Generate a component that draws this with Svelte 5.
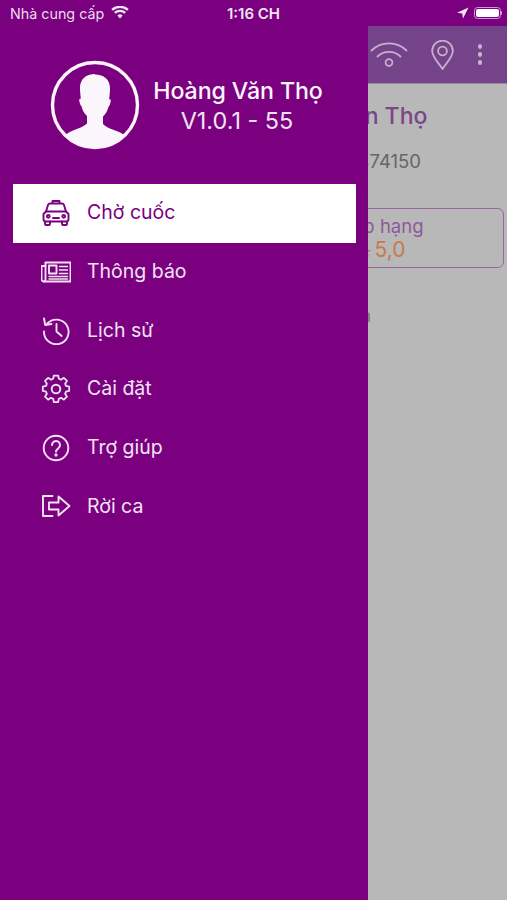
<script>
  const items = [
    { id: 'taxi', label: 'Chờ cuốc', active: true },
    { id: 'news', label: 'Thông báo' },
    { id: 'history', label: 'Lịch sử' },
    { id: 'gear', label: 'Cài đặt' },
    { id: 'help', label: 'Trợ giúp' },
    { id: 'logout', label: 'Rời ca' }
  ];
</script>

<div class="screen">
  <header class="status">
    <div class="status-left">
      <span>Nhà cung cấp</span>
      <svg class="wifi" viewBox="0 0 18 13" width="18" height="13">
        <path d="M9 12.6 6.3 9.6a3.9 3.9 0 0 1 5.4 0zM4.6 7.8 3 6a8.800 8.800 0 0 1 12 0l-1.600 1.800a6.400 6.400 0 0 0-8.800 0zM1.900 4.800.3 3a13 13 0 0 1 17.400 0l-1.600 1.800a10.600 10.600 0 0 0-14.200 0z" fill="#f1e2f2"/>
      </svg>
    </div>
    <div class="status-time">1:16 CH</div>
    <div class="status-right">
      <svg viewBox="0 0 13 12" width="13" height="12"><path d="M12.500.5 1 5.800l5.200.7.800 5z" fill="#f4e8f5"/></svg>
      <div class="battery"><div class="battery-fill"></div></div>
      <div class="battery-cap"></div>
    </div>
  </header>

  <div class="body">
    <nav class="drawer">
      <div class="profile">
        <svg class="avatar" viewBox="0 0 90 90" width="90" height="90">
          <defs><clipPath id="ring"><circle cx="45" cy="45" r="42"/></clipPath></defs>
          <circle cx="45" cy="45" r="42.500" fill="none" stroke="#fbf6fb" stroke-width="3.400"/>
          <path clip-path="url(#ring)" d="M45 14c-9 0-15 5-15 14 0 4 .6 8 .8 11-.9-.5-1.800.3-1.500 2 .4 2 1.200 4.700 2.300 5.500.8 4 2.700 7 5.400 9.500v7.500c-3 3-9 5-14 7-3.500 1.400-7 3.500-8 5v14h60V76c-1.500-2-5-3.600-8.500-5-5-2-11-4-13.500-7v-7.500c2.700-2.500 4.600-5.500 5.400-9.500 1.100-.8 1.900-3.500 2.300-5.500.3-1.700-.6-2.500-1.500-2 .2-3 .8-7 .8-11 0-9-6-14-15-14z" fill="#fbf6fb"/>
        </svg>
        <div class="who">
          <div class="name">Hoàng Văn Thọ</div>
          <div class="version">V1.0.1 - 55</div>
        </div>
      </div>

      <ul class="menu">
        {#each items as item}
          <li class="row" class:active={item.active}>
            <svg class="icon" viewBox="0 0 30 30" width="30" height="30" fill="none" stroke="currentColor" stroke-width="1.900" stroke-linecap="round" stroke-linejoin="round">
              {#if item.id === 'taxi'}
                <path d="M11.500 5V3h7v2"/>
                <path d="M9 5.500h12c1 0 1.500.5 2 1.500l2 6.500H5l2-6.500c.5-1 1-1.500 2-1.500z"/>
                <path d="M5 13.500 2.500 16v5c0 1.500.5 2.500 2 2.500h21c1.500 0 2-1 2-2.500v-5L25 13.500"/>
                <path d="M4 23.500V26c0 .5.500 1 1 1h3c.5 0 1-.5 1-1v-2.500M21 23.500V26c0 .5.500 1 1 1h3c.5 0 1-.5 1-1v-2.500"/>
                <circle cx="7.300" cy="18.300" r="1.400"/>
                <circle cx="22.700" cy="18.300" r="1.400"/>
                <path d="M12 20h6"/>
              {:else if item.id === 'news'}
                <path d="M4.500 5.500h25v19H3a2.500 2.500 0 0 1-2.500-2.500V9h4"/>
                <path d="M4.500 6v16.500a2 2 0 0 1-1.500 2"/>
                <path d="M8 8.500h7.500v8H8z"/>
                <path d="M18.500 9.500h8M18.500 13h8M18.500 16.500h8M8 19.500h18.500M8 22h18.500" stroke-width="1.400"/>
              {:else if item.id === 'history'}
                <path d="M6.300 8.500A12.300 12.300 0 1 1 3 16.500"/>
                <path d="M3 3.500 4.200 10 10.500 9"/>
                <path d="M15.500 9v7.500l5.200 4.500"/>
              {:else if item.id === 'gear'}
                <circle cx="15" cy="15" r="4.300"/>
                <path d="M12.700 2.500h4.600l.8 3.500 2.300 1 3.100-2 3.300 3.300-2 3.100.9 2.300 3.500.8v4.600l-3.500.8-.9 2.300 2 3.100-3.300 3.200-3.100-2-2.300 1-.8 3.500h-4.600l-.8-3.500-2.300-1-3.100 2-3.300-3.200 2-3.100-.9-2.300-3.500-.8v-4.600l3.500-.8.900-2.300-2-3.100 3.300-3.300 3.100 2 2.300-1z" transform="translate(15 15) scale(.93) translate(-15 -17)"/>
              {:else if item.id === 'help'}
                <circle cx="15" cy="15" r="12.300"/>
                <path d="M11 12a4 4 0 1 1 6.300 3.300c-1.400.9-2.300 1.600-2.300 3.200" stroke-width="2"/>
                <circle cx="15" cy="22" r=".7" fill="currentColor"/>
              {:else}
                <path d="M11.500 5H2v20h9.500"/>
                <path d="M8 11.500h9.500V5.500L28.500 15 17.500 24.500V18.500H8z"/>
              {/if}
            </svg>
            <span class="label">{item.label}</span>
          </li>
        {/each}
      </ul>
    </nav>

    <aside class="behind">
      <div class="toolbar">
        <svg viewBox="0 0 38 28" width="38" height="28" fill="none" stroke="#c6b0cb" stroke-width="1.800" stroke-linecap="round">
          <path d="M1.500 9.500a25 25 0 0 1 35 0M7.500 15.500a16.500 16.500 0 0 1 23 0"/>
          <circle cx="19" cy="21.500" r="3.400"/>
        </svg>
        <svg viewBox="0 0 23 30" width="23" height="30" fill="none" stroke="#c6b0cb" stroke-width="1.800">
          <path d="M11.500 29C7 22 1.200 17 1.200 11a10.300 10.300 0 0 1 20.600 0c0 6-5.800 11-10.300 18z"/>
          <circle cx="11.500" cy="11" r="4.400"/>
        </svg>
        <div class="dots"><i></i><i></i><i></i></div>
      </div>
      <div class="sheet">
        <div class="driver">Hoàng Văn Thọ</div>
        <div class="phone">0987474150</div>
        <div class="rank">
          <div class="rank-title">Xếp hạng</div>
          <div class="rank-value"><span class="star">★</span>5,0</div>
        </div>
        <div class="stub">Chuyến</div>
      </div>
    </aside>
  </div>
</div>

<style>
  :global(body) {
    margin: 0;
    background: #7a0080;
  }
  .screen {
    width: 507px;
    height: 900px;
    display: flex;
    flex-direction: column;
    overflow: hidden;
    background: #7a0080;
    font-family: Inter, "Liberation Sans", sans-serif;
    color: #fbf4fb;
  }
  .status {
    height: 26px;
    flex: none;
    position: relative;
    display: flex;
    align-items: center;
    justify-content: space-between;
    padding: 0 5px 0 10px;
    font-size: 14.300px;
    color: #ecdcee;
  }
  .status-left {
    display: flex;
    align-items: center;
    gap: 7px;
  }
  .wifi {
    margin-top: -1px;
  }
  .status-time {
    position: absolute;
    left: 0;
    right: 0;
    top: 6px;
    text-align: center;
    font-size: 15px;
    font-weight: 600;
    line-height: 16px;
    color: #f0e4f1;
  }
  .status-right {
    display: flex;
    align-items: center;
  }
  .battery {
    width: 27px;
    height: 12px;
    margin-left: 5px;
    box-sizing: border-box;
    border: 1px solid #c89fd0;
    border-radius: 3.500px;
    padding: 1px;
  }
  .battery-fill {
    height: 100%;
    border-radius: 2px;
    background: #fff;
  }
  .battery-cap {
    width: 1.500px;
    height: 4px;
    background: #c89fd0;
    border-radius: 0 1px 1px 0;
  }
  .body {
    flex: 1;
    display: flex;
    min-height: 0;
  }
  .drawer {
    width: 368px;
    flex: none;
    box-sizing: border-box;
    padding: 34px 12px 0 13px;
  }
  .profile {
    display: flex;
    align-items: center;
    height: 90px;
    padding-left: 37px;
  }
  .avatar {
    flex: none;
    margin-right: 10px;
  }
  .who {
    width: 176px;
    text-align: center;
    white-space: nowrap;
  }
  .name {
    font-size: 23.200px;
    line-height: 30px;
    font-weight: 500;
    letter-spacing: -.1px;
  }
  .version {
    padding-right: 2px;
    font-size: 23.400px;
    line-height: 29px;
    color: #f1e4f2;
  }
  .menu {
    list-style: none;
    margin: 34px 0 0;
    padding: 0;
  }
  .row {
    height: 58.700px;
    display: flex;
    align-items: center;
    padding-left: 28px;
    gap: 16px;
    font-size: 19.500px;
    color: #f3e3f4;
  }
  .row.active {
    background: #fff;
    color: #7a0080;
  }
  .icon {
    flex: none;
    margin-top: -1px;
  }
  .label {
    padding-bottom: 2px;
  }
  .behind {
    flex: 1;
    min-width: 0;
    display: flex;
    flex-direction: column;
    overflow: hidden;
  }
  .toolbar {
    height: 58px;
    flex: none;
    background: #75438a;
    border-bottom: 1px solid #9a8aa0;
    box-sizing: border-box;
    display: flex;
    align-items: center;
    padding-left: 2px;
  }
  .toolbar svg:nth-child(2) {
    margin-left: 23px;
  }
  .dots {
    display: flex;
    flex-direction: column;
    gap: 3.500px;
    margin-left: 23.500px;
  }
  .dots i {
    width: 4.500px;
    height: 4.500px;
    border-radius: 50%;
    background: #c6b0cb;
  }
  .sheet {
    flex: 1;
    background: #b8b8b8;
    margin-left: -110px;
    white-space: nowrap;
    text-align: right;
  }
  .driver {
    margin-top: 18px;
    padding-right: 89px;
    font-size: 23px;
    line-height: 28px;
    font-weight: 500;
    color: #7a4589;
  }
  .phone {
    margin-top: 18px;
    padding-right: 86px;
    font-size: 18.500px;
    line-height: 26px;
    color: #666;
  }
  .rank {
    margin: 34px 3px 0 0;
    height: 60px;
    box-sizing: border-box;
    border: 1.500px solid #9a67a4;
    border-radius: 6px;
    padding-top: 5px;
  }
  .rank-title {
    padding-right: 79.500px;
    font-size: 18.500px;
    line-height: 24px;
    color: #8d5a9a;
  }
  .rank-value {
    padding-right: 97.500px;
    font-size: 21px;
    line-height: 24px;
    color: #c77a4a;
  }
  .star {
    margin-right: 2px;
    font-size: 14px;
  }
  .stub {
    margin-top: 38px;
    padding-right: 136px;
    font-size: 17px;
    color: #777;
  }
</style>
